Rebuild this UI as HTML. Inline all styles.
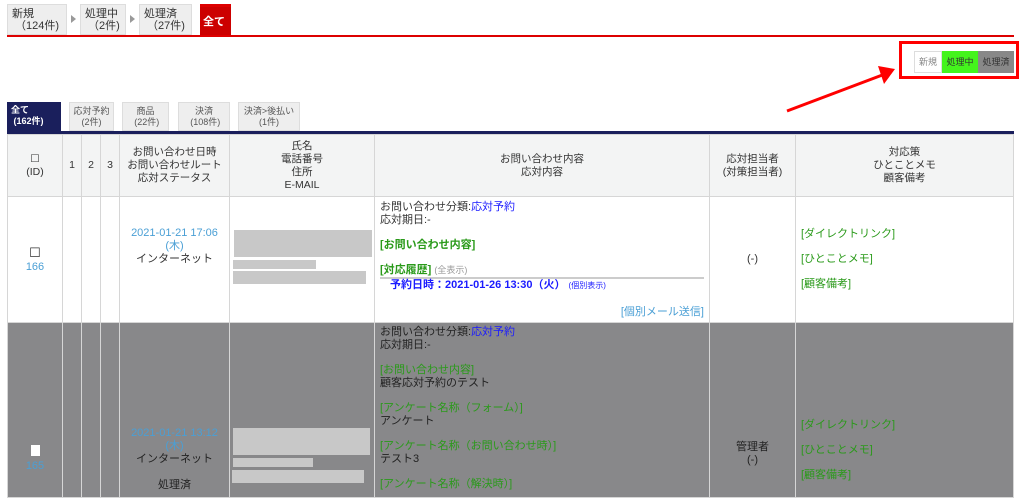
<!DOCTYPE html>
<html><head><meta charset="utf-8"><style>
*{box-sizing:border-box;margin:0;padding:0}
body{width:1024px;height:494px;overflow:hidden;background:#fff;font-family:"Liberation Sans","Noto Sans CJK JP",sans-serif;font-size:11px;color:#333;position:relative}
.a{position:absolute;white-space:nowrap}
.tab{position:absolute;top:4px;height:31px;background:#eee;border:1px solid #ddd;font-size:11px;line-height:12px;padding:3px 4px;color:#333;white-space:nowrap}
.tri{position:absolute;top:15px;width:0;height:0;border-left:5px solid #999;border-top:4px solid transparent;border-bottom:4px solid transparent}
.st{position:absolute;top:102px;height:29px;background:#eee;border:1px solid #ddd;font-size:9px;line-height:11px;padding:3px 2px;color:#555;text-align:center;white-space:nowrap}
table{position:absolute;left:7px;top:134px;border-collapse:collapse;width:1006px;table-layout:fixed}
td{border:1px solid #d6d6d6;vertical-align:middle;text-align:center;font-size:11px;line-height:13px}
.h td{background:#f3f4f4;height:62px;font-size:10.5px}
.g{color:#2a9a1a}
.b{color:#1a1aff}
.lb{color:#4a9fd5}
.blk{background:#c8c8c8;position:absolute}
.l{text-align:left;vertical-align:top;padding:4px 5px}
</style></head><body>
<div class="tab" style="left:7px;width:60px">新規<br>&nbsp;（124件)</div>
<div class="tri" style="left:71px"></div>
<div class="tab" style="left:80px;width:46px">処理中<br>&nbsp;（2件)</div>
<div class="tri" style="left:130px"></div>
<div class="tab" style="left:139px;width:53px">処理済<br>&nbsp;（27件)</div>
<div class="a" style="left:200px;top:4px;width:31px;height:31px;background:#c00;color:#fff;font-weight:bold;font-size:11px;padding:6px 3px 0;border-top:3px solid #d00">全て</div>
<div class="a" style="left:7px;top:35px;width:1007px;height:2px;background:#d00"></div>

<div class="a" style="left:899px;top:41px;width:120px;height:38px;border:3px solid #f00"></div>
<div class="a" style="left:914px;top:51px;width:28px;height:22px;border:1px solid #ddd;background:#fff;color:#888;font-size:9px;line-height:20px;text-align:center">新規</div>
<div class="a" style="left:942px;top:51px;width:36px;height:22px;background:#44f41c;color:#333;font-size:9px;line-height:22px;text-align:center">処理中</div>
<div class="a" style="left:978px;top:51px;width:36px;height:22px;background:#888;color:#333;font-size:9px;line-height:22px;text-align:center">処理済</div>
<svg class="a" style="left:780px;top:60px" width="125" height="60"><line x1="7" y1="51" x2="105" y2="14" stroke="#f00" stroke-width="3"/><polygon points="115,9 98,6 104,24" fill="#f00"/></svg>

<div class="a" style="left:7px;top:102px;width:54px;height:29px;background:#1a1f5c;color:#fff;font-weight:bold;font-size:9px;line-height:11px;padding:3px 4px">全て<br>&nbsp;(162件)</div>
<div class="st" style="left:69px;width:45px">応対予約<br>(2件)</div>
<div class="st" style="left:122px;width:47px">商品<br>&nbsp;(22件)</div>
<div class="st" style="left:178px;width:52px">決済<br>&nbsp;(108件)</div>
<div class="st" style="left:238px;width:62px">決済>後払い<br>(1件)</div>
<div class="a" style="left:7px;top:131px;width:1007px;height:3px;background:#1a1f5c"></div>

<table>
<colgroup><col style="width:55px"><col style="width:19px"><col style="width:19px"><col style="width:19px"><col style="width:110px"><col style="width:145px"><col style="width:335px"><col style="width:86px"><col style="width:218px"></colgroup>
<tr class="h"><td>☐<br>(ID)</td><td>1</td><td>2</td><td>3</td><td>お問い合わせ日時<br>お問い合わせルート<br>応対ステータス</td><td>氏名<br>電話番号<br>住所<br>E-MAIL</td><td>お問い合わせ内容<br>応対内容</td><td>応対担当者<br>(対策担当者)</td><td>対応策<br>ひとことメモ<br>顧客備考</td></tr>
<tr style="height:126px;background:#fff"><td><span style="font-size:13px">☐</span><br><span class="lb">166</span></td><td></td><td></td><td></td><td style="vertical-align:top;padding-top:30px"><span class="lb">2021-01-21 17:06<br>(木)</span><br>インターネット</td><td></td>
<td class="l" style="line-height:12.5px">お問い合わせ分類:<span class="b">応対予約</span><br>応対期日:-<br><br><b class="g">[お問い合わせ内容]</b><br><br><b class="g">[対応履歴]</b> <span style="color:#999;font-size:9px">(全表示)</span><div style="border-top:2px solid #ccc;margin:1px 0 0 0;padding-left:10px"><b class="b">予約日時：2021-01-26 13:30（火）</b> <span class="b" style="font-size:8px">(個別表示)</span></div><div style="text-align:right;margin-top:13px" class="lb">[個別メール送信]</div></td>
<td>(-)</td><td style="text-align:left;padding-left:5px;line-height:25px" class="g">[ダイレクトリンク]<br>[ひとことメモ]<br>[顧客備考]</td></tr>
<tr style="height:175px;background:#88888a"><td style="vertical-align:top;padding-top:122px"><span style="display:inline-block;width:9px;height:11px;background:#fff"></span><br><span class="lb">165</span></td><td></td><td></td><td></td><td style="vertical-align:top;padding-top:104px;color:#222"><span class="lb">2021-01-21 13:12<br>(木)</span><br>インターネット<br><br>処理済</td><td></td>
<td class="l" style="line-height:12.7px;color:#222;padding-top:3px">お問い合わせ分類:<span class="b">応対予約</span><br>応対期日:-<br><br><span class="g">[お問い合わせ内容]</span><br>顧客応対予約のテスト<br><br><span class="g">[アンケート名称（フォーム）]</span><br>アンケート<br><br><span class="g">[アンケート名称（お問い合わせ時）]</span><br>テスト3<br><br><span class="g">[アンケート名称（解決時）]</span></td>
<td style="vertical-align:top;padding-top:118px;color:#222">管理者<br>(-)</td><td style="text-align:left;padding-left:5px;line-height:25px;vertical-align:top;padding-top:90px" class="g">[ダイレクトリンク]<br>[ひとことメモ]<br>[顧客備考]</td></tr>
</table>
<div class="blk" style="left:234px;top:230px;width:138px;height:27px"></div>
<div class="blk" style="left:233px;top:260px;width:83px;height:9px"></div>
<div class="blk" style="left:233px;top:271px;width:133px;height:13px"></div>
<div class="blk" style="left:233px;top:428px;width:137px;height:27px"></div>
<div class="blk" style="left:233px;top:458px;width:80px;height:9px"></div>
<div class="blk" style="left:232px;top:470px;width:132px;height:13px"></div>
</body></html>
